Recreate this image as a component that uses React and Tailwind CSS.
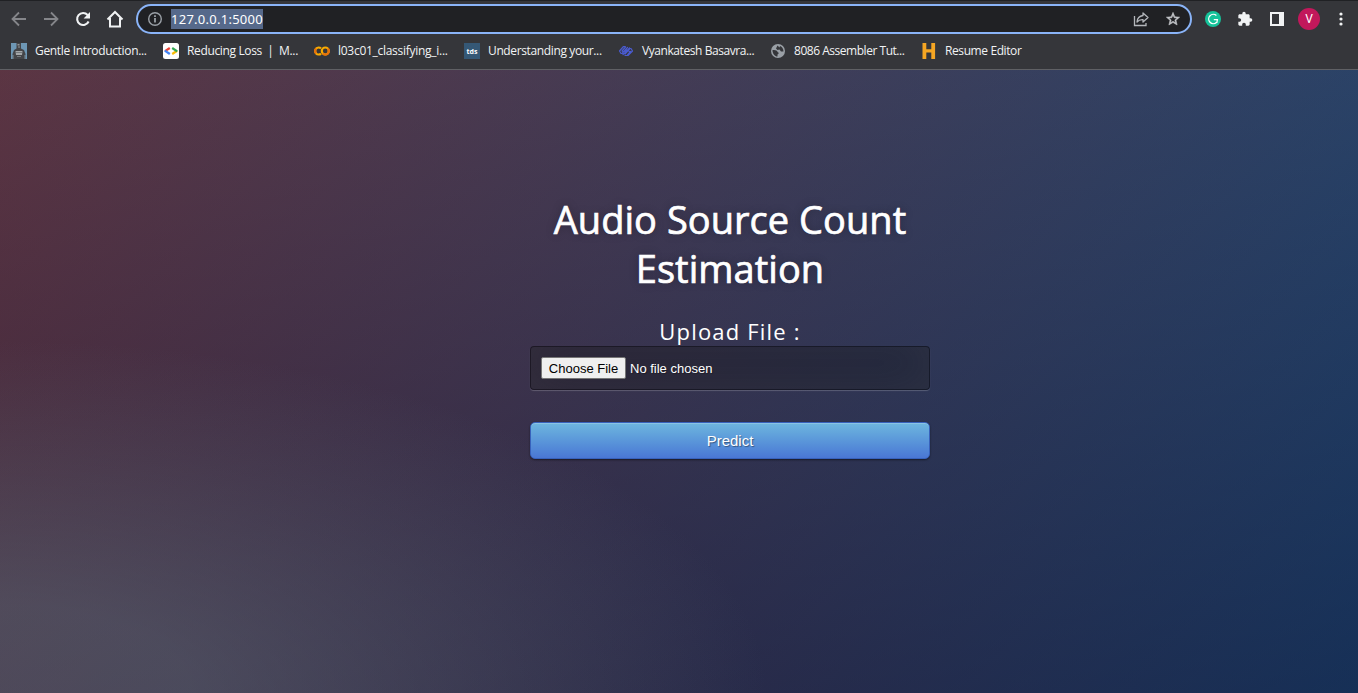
import React from "react";

const IconBack = () => (
  <svg width="16" height="16" viewBox="0 0 16 16" fill="none" stroke="#85868a" strokeWidth="1.800"><path d="M15 8H2M8 1.500L1.500 8L8 14.500" /></svg>
);
const IconForward = () => (
  <svg width="16" height="16" viewBox="0 0 16 16" fill="none" stroke="#85868a" strokeWidth="1.800"><path d="M1 8h13M8 1.500L14.500 8L8 14.500" /></svg>
);
const IconReload = () => (
  <svg width="16" height="16" viewBox="0 0 16 16"><path d="M13.600 10.500A6 6 0 1 1 12.600 4" fill="none" stroke="#f1f3f4" strokeWidth="2.100" /><path d="M15 1v6.400H8.600z" fill="#f1f3f4" /></svg>
);
const IconHome = () => (
  <svg width="18" height="18" viewBox="0 0 18 18" fill="none" stroke="#f1f3f4" strokeWidth="2"><path d="M1.500 9.500L9 2l7.500 7.500M4 8v8.500h10V8" /></svg>
);
const IconInfo = () => (
  <svg width="16" height="16" viewBox="0 0 16 16"><circle cx="8" cy="8" r="6.300" fill="none" stroke="#9aa0a6" strokeWidth="1.400" /><path d="M7.100 7h1.800v4.500H7.100zM7.100 4.300h1.800v1.600H7.100z" fill="#9aa0a6" /></svg>
);
const IconShare = () => (
  <svg width="16" height="16" viewBox="0 0 16 16" fill="none" stroke="#b4b7bb" strokeWidth="1.300"><path d="M1.500 5v9.500h11.500V12" /><path d="M10 2l5 4.500l-5 4.500V8.700C7.500 8.500 5.500 9.300 4 11C4.300 7.500 6.500 5 10 4.500z" strokeLinejoin="round" /></svg>
);
const IconStar = () => (
  <svg width="16" height="16" viewBox="0 0 24 24" fill="#c4c7ca"><path d="M22 9.240l-7.190-.62L12 2 9.190 8.630 2 9.240l5.460 4.730L5.820 21 12 17.270 18.180 21l-1.630-7.030L22 9.240zM12 15.400l-3.760 2.270 1-4.280-3.320-2.880 4.380-.38L12 6.100l1.710 4.040 4.380.38-3.320 2.880 1 4.280L12 15.400z" stroke="#c4c7ca" strokeWidth=".8" /></svg>
);
const IconGrammar = () => (
  <svg width="16" height="16" viewBox="0 0 16 16"><circle cx="8" cy="8" r="8" fill="#15c39a" /><path d="M11.400 4.600A4.600 4.600 0 1 0 11.400 11.400M8.800 8.700H12.400L11.800 12" fill="none" stroke="#fff" strokeWidth="1.300" /></svg>
);
const IconPuzzle = () => (
  <svg width="16" height="16" viewBox="0 0 24 24" fill="#f1f3f4"><path d="M20.500 11H19V7c0-1.100-.9-2-2-2h-4V3.500a2.500 2.500 0 0 0-5 0V5H4c-1.100 0-1.990.9-1.990 2v3.800H3.500c1.490 0 2.700 1.210 2.700 2.700s-1.210 2.700-2.700 2.700H2V20c0 1.100.9 2 2 2h3.800v-1.500c0-1.490 1.210-2.700 2.700-2.700 1.490 0 2.700 1.210 2.700 2.700V22H17c1.100 0 2-.9 2-2v-4h1.500a2.500 2.500 0 0 0 0-5z" /></svg>
);
const IconPanel = () => (
  <svg width="14" height="14" viewBox="0 0 14 14"><path fillRule="evenodd" d="M0 0h14v14H0zM2 2v10h7V2z" fill="#f1f3f4" /></svg>
);
const IconDots = () => (
  <svg width="4" height="14" viewBox="0 0 4 14" fill="#f1f3f4"><circle cx="2" cy="2" r="1.600" /><circle cx="2" cy="7" r="1.600" /><circle cx="2" cy="12" r="1.600" /></svg>
);

const FavRobot = () => (
  <svg width="16" height="16" viewBox="0 0 16 16">
    <path d="M0 0h16v16H0z" fill="#6d97b5" />
    <path d="M5.500 0h4.500v5.500l3 1.500l1.500 4v5h-13v-5L3 7l2.500-1.500z" fill="#444548" />
    <path d="M6.500 1h2v1.500h-2zM7 3.500h2v1H7z" fill="#92979a" />
    <path d="M4.500 8h7l-.5 4h-6z" fill="#a4a7a9" />
    <path d="M5 9.500h6M6 13.500h4" stroke="#75797c" />
    <path d="M2 12v4M14 12v4" stroke="#8fa9bb" strokeWidth=".7" />
  </svg>
);
const FavDevelopers = () => (
  <svg width="16" height="16" viewBox="0 0 16 16" fill="none" strokeWidth="2.200"><rect width="16" height="16" rx="2.500" fill="#fff" /><path d="M6.800 5L2 8.200" stroke="#ea4335" /><path d="M1.800 7.600L6.800 11" stroke="#4285f4" /><path d="M14.200 7.800L9.200 11" stroke="#fbbc04" /><path d="M9.200 5L14.200 8.300" stroke="#34a853" /></svg>
);
const FavColab = () => (
  <svg width="16" height="16" viewBox="0 0 16 16" fill="none" strokeWidth="2.200"><path d="M7 5.400A3.500 3.500 0 1 0 7 10.600" stroke="#f9ab00" /><circle cx="11.300" cy="8" r="3.500" stroke="#f9ab00" /><path d="M2.200 10.500A3.500 3.500 0 0 1 2.200 5.500M13.800 5.500A3.500 3.500 0 0 1 8.800 10.500" stroke="#e8710a" /></svg>
);
const FavTds = () => (
  <span className="flex size-4 items-center justify-center bg-[#355876] font-['Open_Sans',sans-serif] text-[7px] font-bold leading-none text-white">tds</span>
);
const FavKnot = () => (
  <svg width="16" height="16" viewBox="0 0 16 16" fill="none" stroke="#4a5bd0" strokeWidth="1.200" strokeLinecap="round" strokeLinejoin="round"><path d="M7 3.500H5.500L1.500 8L3 10.500H4L9.500 4.500M4 8L7.500 4M5 11.500L9 7L11.500 8.500M4.800 8.500L7.300 9.500L11.500 5M7 12.500H10L14.500 8L13 5.500H12L7 11M9.500 12L12.500 8.500" /></svg>
);
const FavGlobe = () => (
  <svg width="16" height="16" viewBox="0 0 16 16"><circle cx="8" cy="8" r="7" fill="#9aa0a6" /><path d="M2.400 7.200C5 6.500 7 7.500 7.800 9.200C9.500 9.500 8.500 11 7.500 11.500V13.500C5 13.500 2.700 11 2.400 7.200zM7.500 2.500L6 5.500L7.500 7L9.500 6.500L11 8.500L13.500 8.500C13.500 6 12 3.800 10 3L9.500 4.500z" fill="#35363a" /></svg>
);
const FavH = () => (
  <svg width="16" height="16" viewBox="0 0 16 16" fill="#f5a623"><path d="M1.500 0h3.800v6.200h5V0h3.800v16h-3.800V9.600h-5V16H1.500z" /></svg>
);

const Bookmark = ({ icon, label, box, track }) => (
  <div className={`flex shrink-0 items-center gap-2 ${box}`}>
    {icon}
    <span className={`whitespace-pre ${track}`}>{label}</span>
  </div>
);

export default function App() {
  return (
    <div className="flex h-[693px] w-[1358px] flex-col overflow-hidden bg-[#35363a]">
      <header className="flex h-[70px] shrink-0 flex-col border-t border-b border-t-[#202124] border-b-[#5f6064] font-['Open_Sans',sans-serif] text-[12px] text-[#f1f3f4]">
        <div className="flex h-[36px] shrink-0 items-center pl-[11px]">
          <div className="flex items-center gap-4">
            <IconBack />
            <IconForward />
            <IconReload />
          </div>
          <div className="ml-[15px]"><IconHome /></div>
          <div className="ml-3 flex h-[30px] w-[1056px] items-center rounded-full border-2 border-[#8ab4f8] bg-[#202124] pr-[9px] pl-[9px]">
            <IconInfo />
            <span className="ml-2 h-5 w-[92px] bg-[#56698b] font-['Noto_Sans',sans-serif] text-[13px] leading-5 tracking-[0.26px] whitespace-nowrap text-white">127.0.0.1:5000</span>
            <div className="ml-auto flex gap-4">
              <IconShare />
              <IconStar />
            </div>
          </div>
          <div className="ml-[13px]"><IconGrammar /></div>
          <div className="ml-[16px]"><IconPuzzle /></div>
          <div className="ml-[17px]"><IconPanel /></div>
          <div className="ml-[14px] flex size-[22px] items-center justify-center rounded-full bg-[#c2185b] font-['Roboto',sans-serif] text-[12px] text-white">V</div>
          <div className="ml-[19px]"><IconDots /></div>
        </div>
        <nav className="flex h-[28px] shrink-0 items-center pl-[11px]">
          <Bookmark icon={<FavRobot />} label="Gentle Introduction..." box="w-[152px]" track="tracking-[-0.33px]" />
          <Bookmark icon={<FavDevelopers />} label="Reducing Loss  |  M..." box="w-[151px]" track="tracking-[-0.36px]" />
          <Bookmark icon={<FavColab />} label="l03c01_classifying_i..." box="w-[150px]" track="tracking-[-0.28px]" />
          <Bookmark icon={<FavTds />} label="Understanding your..." box="w-[154px]" track="tracking-[-0.37px]" />
          <Bookmark icon={<FavKnot />} label="Vyankatesh Basavra..." box="w-[152px]" track="tracking-[-0.43px]" />
          <Bookmark icon={<FavGlobe />} label="8086 Assembler Tut..." box="w-[151px]" track="tracking-[-0.47px]" />
          <Bookmark icon={<FavH />} label="Resume Editor" box="" track="tracking-[-0.4px]" />
        </nav>
      </header>
      <main className="min-h-0 flex-1 bg-[radial-gradient(ellipse_farthest-corner_at_0%_100%,rgba(104,128,138,.4)_10%,rgba(138,114,76,0)_40%),linear-gradient(to_bottom,rgba(57,173,219,.25)_0%,rgba(42,60,87,.4)_100%),linear-gradient(135deg,#670d10_0%,#092756_100%)] pt-[125px] pl-[530px] font-['Open_Sans',sans-serif] text-white">
        <div className="flex w-[400px] flex-col">
          <h1 className="px-5 text-center text-[38px] leading-[49px] font-medium tracking-[0.04px] [-webkit-text-stroke:0.7px_white] [text-shadow:0_0_10px_rgba(0,0,0,.3)]">Audio Source Count Estimation</h1>
          <form className="flex flex-col pt-[23px]" onSubmit={(e) => e.preventDefault()}>
            <p className="h-[30px] text-center text-[22px] leading-[30px] tracking-[1.18px]">Upload File :</p>
            <div className="flex h-[44px] items-center gap-1 rounded-[4px] border border-black/30 bg-black/30 px-[10px] font-['Liberation_Sans',sans-serif] text-[13px] shadow-[inset_0_-5px_45px_rgba(100,100,100,.2),0_1px_1px_rgba(255,255,255,.2)] [text-shadow:1px_1px_1px_rgba(0,0,0,.3)]">
              <button type="button" className="h-[22px] w-[85px] rounded-[2px] border border-[#767676] bg-[#efefef] pt-px text-black [text-shadow:none]">Choose File</button>
              <span className="pt-px">No file chosen</span>
            </div>
            <button type="submit" className="mt-8 h-[37px] rounded-[5px] border border-[#3762bc] bg-linear-to-b from-[#6eb6de] to-[#4a77d4] pt-0.5 font-['Liberation_Sans',sans-serif] text-[15px] shadow-[inset_0_1px_0_rgba(255,255,255,.2),0_1px_2px_rgba(0,0,0,.5)] [text-shadow:1px_1px_1px_rgba(0,0,0,.4)]">Predict</button>
          </form>
        </div>
      </main>
    </div>
  );
}
